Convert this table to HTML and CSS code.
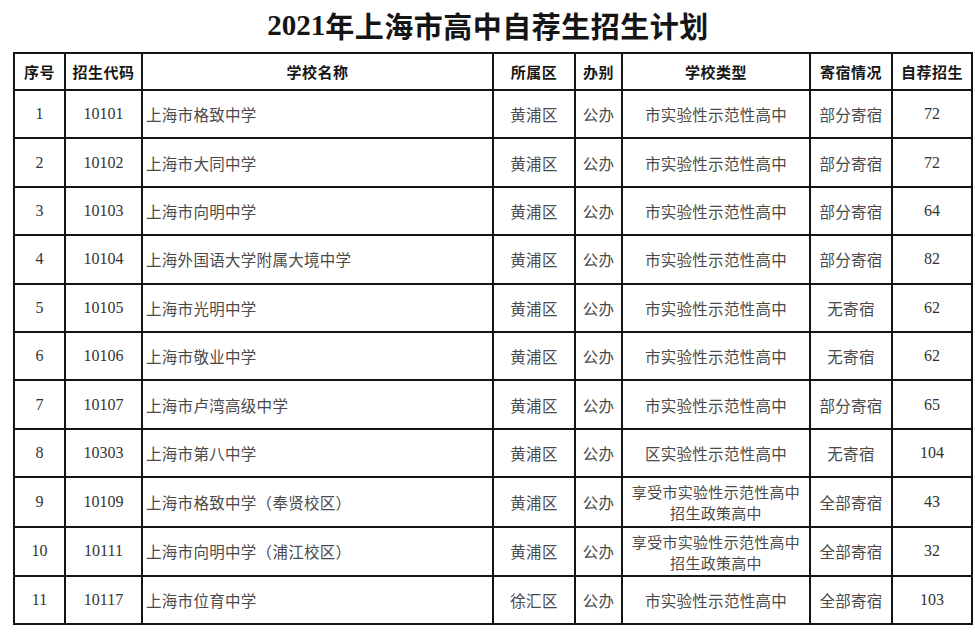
FILE: index.html
```html
<!DOCTYPE html>
<html lang="zh-CN">
<head>
<meta charset="utf-8">
<title>2021年上海市高中自荐生招生计划</title>
<link rel="stylesheet" href="styles.css">
</head>
<body>
<div class="page">
  <h1 class="title"><span class="num">2021</span>年上海市高中自荐生招生计划</h1>
  <table class="plan">
    <colgroup>
      <col class="c1"><col class="c2"><col class="c3"><col class="c4"><col class="c5"><col class="c6"><col class="c7"><col class="c8">
    </colgroup>
    <thead>
      <tr><th>序号</th><th>招生代码</th><th>学校名称</th><th>所属区</th><th>办别</th><th>学校类型</th><th>寄宿情况</th><th>自荐招生</th></tr>
    </thead>
    <tbody>
      <tr><td class="n">1</td><td class="n">10101</td><td class="name">上海市格致中学</td><td>黄浦区</td><td>公办</td><td>市实验性示范性高中</td><td>部分寄宿</td><td class="n">72</td></tr>
      <tr><td class="n">2</td><td class="n">10102</td><td class="name">上海市大同中学</td><td>黄浦区</td><td>公办</td><td>市实验性示范性高中</td><td>部分寄宿</td><td class="n">72</td></tr>
      <tr><td class="n">3</td><td class="n">10103</td><td class="name">上海市向明中学</td><td>黄浦区</td><td>公办</td><td>市实验性示范性高中</td><td>部分寄宿</td><td class="n">64</td></tr>
      <tr><td class="n">4</td><td class="n">10104</td><td class="name">上海外国语大学附属大境中学</td><td>黄浦区</td><td>公办</td><td>市实验性示范性高中</td><td>部分寄宿</td><td class="n">82</td></tr>
      <tr><td class="n">5</td><td class="n">10105</td><td class="name">上海市光明中学</td><td>黄浦区</td><td>公办</td><td>市实验性示范性高中</td><td>无寄宿</td><td class="n">62</td></tr>
      <tr><td class="n">6</td><td class="n">10106</td><td class="name">上海市敬业中学</td><td>黄浦区</td><td>公办</td><td>市实验性示范性高中</td><td>无寄宿</td><td class="n">62</td></tr>
      <tr><td class="n">7</td><td class="n">10107</td><td class="name">上海市卢湾高级中学</td><td>黄浦区</td><td>公办</td><td>市实验性示范性高中</td><td>部分寄宿</td><td class="n">65</td></tr>
      <tr><td class="n">8</td><td class="n">10303</td><td class="name">上海市第八中学</td><td>黄浦区</td><td>公办</td><td>区实验性示范性高中</td><td>无寄宿</td><td class="n">104</td></tr>
      <tr><td class="n">9</td><td class="n">10109</td><td class="name">上海市格致中学（奉贤校区）</td><td>黄浦区</td><td>公办</td><td class="two">享受市实验性示范性高中<br>招生政策高中</td><td>全部寄宿</td><td class="n">43</td></tr>
      <tr><td class="n">10</td><td class="n">10111</td><td class="name">上海市向明中学（浦江校区）</td><td>黄浦区</td><td>公办</td><td class="two">享受市实验性示范性高中<br>招生政策高中</td><td>全部寄宿</td><td class="n">32</td></tr>
      <tr><td class="n">11</td><td class="n">10117</td><td class="name">上海市位育中学</td><td>徐汇区</td><td>公办</td><td>市实验性示范性高中</td><td>全部寄宿</td><td class="n">103</td></tr>
    </tbody>
  </table>
</div>
</body>
</html>
```
FILE: styles.css
```css
html, body {
  margin: 0;
  padding: 0;
  background: #ffffff;
}

.page {
  width: 975px;
  padding: 0 0 0 13px;
  box-sizing: border-box;
}

.title {
  margin: 0;
  height: 52px;
  display: flex;
  align-items: center;
  justify-content: center;
  padding: 0 12px 2px 0;
  box-sizing: border-box;
  font-family: "Noto Sans CJK SC", sans-serif;
  font-weight: 700;
  font-size: 29px;
  letter-spacing: 0.5px;
  color: #151515;
  line-height: 1;
}

.title .num {
  font-family: "Liberation Serif", serif;
  font-size: 29px;
  letter-spacing: 0;
}

.plan {
  border-collapse: collapse;
  table-layout: fixed;
  width: 958px;
  font-family: "Liberation Serif", "Noto Sans CJK SC", serif;
  color: #4a4a4a;
}

.c1 { width: 51px; }
.c2 { width: 77px; }
.c3 { width: 351px; }
.c4 { width: 82px; }
.c5 { width: 47px; }
.c6 { width: 188px; }
.c7 { width: 82px; }
.c8 { width: 80px; }

.plan th,
.plan td {
  border: 2px solid #141414;
  padding: 0;
  text-align: center;
  vertical-align: middle;
  white-space: nowrap;
  overflow: hidden;
}

.plan th {
  height: 35px;
  font-family: "Noto Sans CJK SC", sans-serif;
  font-weight: 700;
  font-size: 15px;
  color: #161616;
  letter-spacing: 0.5px;
}

.plan td {
  height: 46.4px;
  font-family: "Noto Sans CJK SC", sans-serif;
  font-size: 15.5px;
  font-weight: 400;
  letter-spacing: 0.3px;
  line-height: 20px;
}

.plan td.n {
  font-family: "Liberation Serif", serif;
  font-size: 16px;
  color: #333;
  letter-spacing: 0;
}

.plan td.name {
  text-align: left;
  padding-left: 3px;
}

.plan td.two {
  font-size: 15px;
  line-height: 21px;
  padding-top: 1px;
}
```
